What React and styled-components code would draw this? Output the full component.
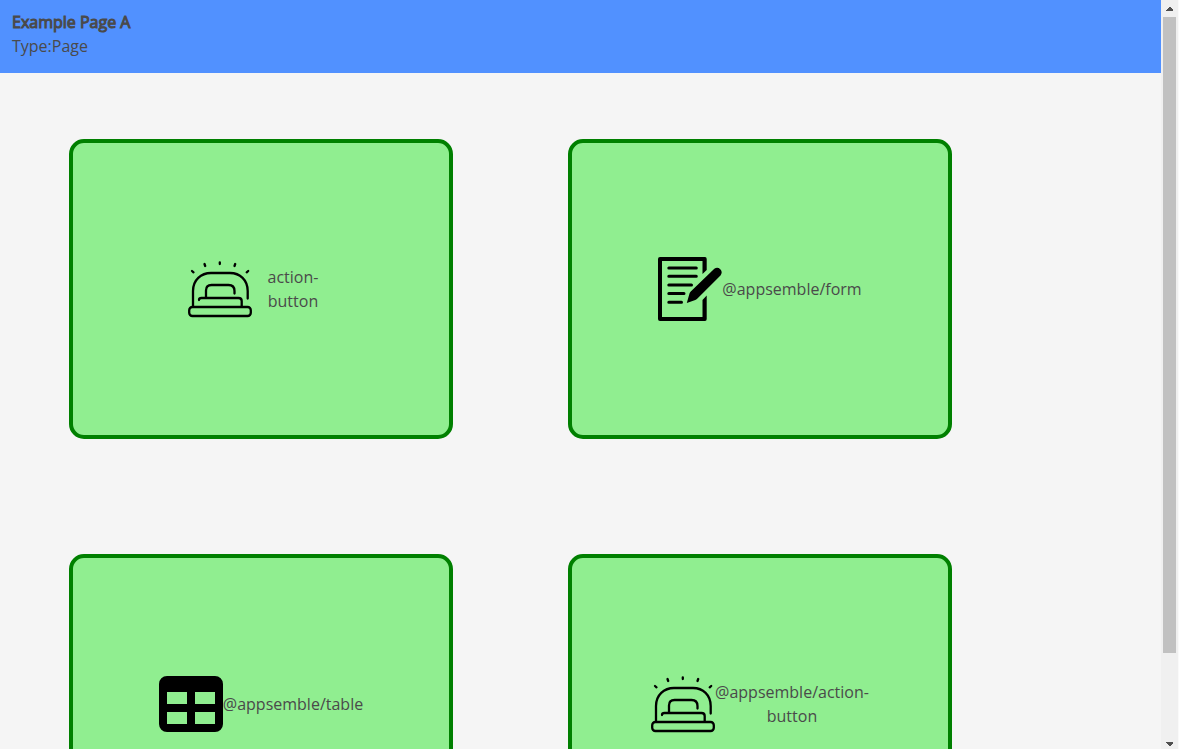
import React from 'react';
import styled, { createGlobalStyle } from 'styled-components';

const GlobalStyle = createGlobalStyle`
  *, *::before, *::after { box-sizing: border-box; }
  body {
    margin: 0;
    background: #f5f5f5;
    color: #4a4a4a;
    font-family: "Open Sans", sans-serif;
    font-size: 16px;
    font-weight: 400;
    line-height: 24px;
  }
`;

const Shell = styled.div`
  display: flex;
  height: 100vh;
  overflow: hidden;
`;

const Content = styled.div`
  flex: 1;
  min-width: 0;
  overflow: hidden;
`;

const PageHeader = styled.header`
  padding: 10px 12px 15px;
  background: #5191ff;
`;

const Title = styled.h1`
  margin: 0;
  font-size: 16px;
  font-weight: 400;
  -webkit-text-stroke: 1px currentColor;
`;

const Subtitle = styled.p`
  margin: 0;
`;

const BlockGrid = styled.main`
  display: grid;
  grid-template-columns: repeat(auto-fill, 384px);
  gap: 115px;
  padding: 66px 69px;
`;

const BlockCard = styled.article`
  display: flex;
  align-items: center;
  justify-content: center;
  height: 300px;
  border: 4px solid green;
  border-radius: 15px;
  background: lightgreen;
`;

const Icon = styled.svg`
  flex: none;
  width: 64px;
  height: 64px;
  color: #000;
`;

const BlockName = styled.span`
  width: min-content;
  margin: 0 ${(p) => (p.$spaced ? '16px' : '0')};
  text-align: center;
`;

const Scrollbar = styled.div`
  display: flex;
  flex: none;
  flex-direction: column;
  width: 18px;
  padding: 0 2px;
  border-right: 1px solid #fafafa;
  background: #f0f0f0;
`;

const ScrollButton = styled.button`
  display: flex;
  flex: none;
  align-items: ${(p) => (p.$end ? 'flex-end' : 'center')};
  justify-content: center;
  height: 17px;
  padding: ${(p) => (p.$end ? '0 0 3px' : '0')};
  border: 0;
  background: transparent;
`;

const Track = styled.div`
  flex: 1;
`;

const Thumb = styled.div`
  height: 89%;
  background: #c1c1c1;
`;

const SirenIcon = () => (
  <Icon viewBox="0 0 64 64" fill="none" stroke="currentColor" strokeWidth="2.3" strokeLinecap="round" aria-hidden="true">
    <rect x="1.200" y="50" width="61.600" height="9" rx="3.200" />
    <path d="M5 49V34C5 23 13 16 23 16H42C52 16 59.700 23 59.700 34V41.500" />
    <path d="M18 40V33.500Q18 28 23.500 28H40.500Q46.500 28 46.500 34V36.500" />
    <path d="M11 43Q11 41 13.500 41H50.500Q53.700 41 53.700 44V49" />
    <path d="M31.800 5.300V7M16.500 7L17.200 9M47.200 7L46.500 9M4 14L5.500 15.300M60.200 14L58.700 15.300" />
  </Icon>
);

const FormIcon = () => (
  <Icon viewBox="0 0 64 64" fill="currentColor" aria-hidden="true">
    <path d="M2 0H47Q48.700 0 48.700 2V13L44.500 17V4H4V60H44.500V43L48.700 38.500V62Q48.700 64 47 64H2Q0 64 0 62V2Q0 0 2 0Z" />
    <path
      d="M10.800 11H38.300M10.800 19.300H38.300M10.800 28H33.500M10.800 36.600H26M10.800 45.300H23.500"
      stroke="currentColor"
      strokeWidth="3"
      strokeLinecap="round"
    />
    <path d="M28.800 46L31.500 36.500Q32 35.300 33 34.300L56.300 11.700Q59.500 9.500 62.300 12.200Q65 15 62.500 18.600L39.700 41.200Q38.700 42.200 37.300 42.900Z" />
  </Icon>
);

const TableIcon = () => (
  <Icon viewBox="0 0 64 64" fill="currentColor" fillRule="evenodd" aria-hidden="true">
    <path d="M8 4H56A8 8 0 0 1 64 12V52A8 8 0 0 1 56 60H8A8 8 0 0 1 0 52V12A8 8 0 0 1 8 4ZM8 20V32H28V20ZM36 20V32H56V20ZM8 40V52H28V40ZM36 40V52H56V40Z" />
  </Icon>
);

const Arrow = ({ d }) => (
  <svg width="7" height="4" viewBox="0 0 7 4" fill="#505050" shapeRendering="crispEdges" aria-hidden="true">
    <path d={d} />
  </svg>
);

const blocks = [
  { name: 'action-button', icon: SirenIcon, spaced: true },
  { name: '@appsemble/form', icon: FormIcon },
  { name: '@appsemble/table', icon: TableIcon },
  { name: '@appsemble/action-button', icon: SirenIcon },
];

export default function App() {
  return (
    <>
      <GlobalStyle />
      <Shell>
        <Content>
          <PageHeader>
            <Title>Example Page A</Title>
            <Subtitle>Type:Page</Subtitle>
          </PageHeader>
          <BlockGrid>
            {blocks.map(({ name, icon: BlockIcon, spaced }) => (
              <BlockCard key={name}>
                <BlockIcon />
                <BlockName $spaced={spaced}>{name}</BlockName>
              </BlockCard>
            ))}
          </BlockGrid>
        </Content>
        <Scrollbar>
          <ScrollButton type="button" aria-label="Scroll up">
            <Arrow d="M3 0H4L7 3V4H0V3Z" />
          </ScrollButton>
          <Track>
            <Thumb />
          </Track>
          <ScrollButton type="button" aria-label="Scroll down" $end>
            <Arrow d="M0 0H7V1L4 4H3L0 1Z" />
          </ScrollButton>
        </Scrollbar>
      </Shell>
    </>
  );
}
